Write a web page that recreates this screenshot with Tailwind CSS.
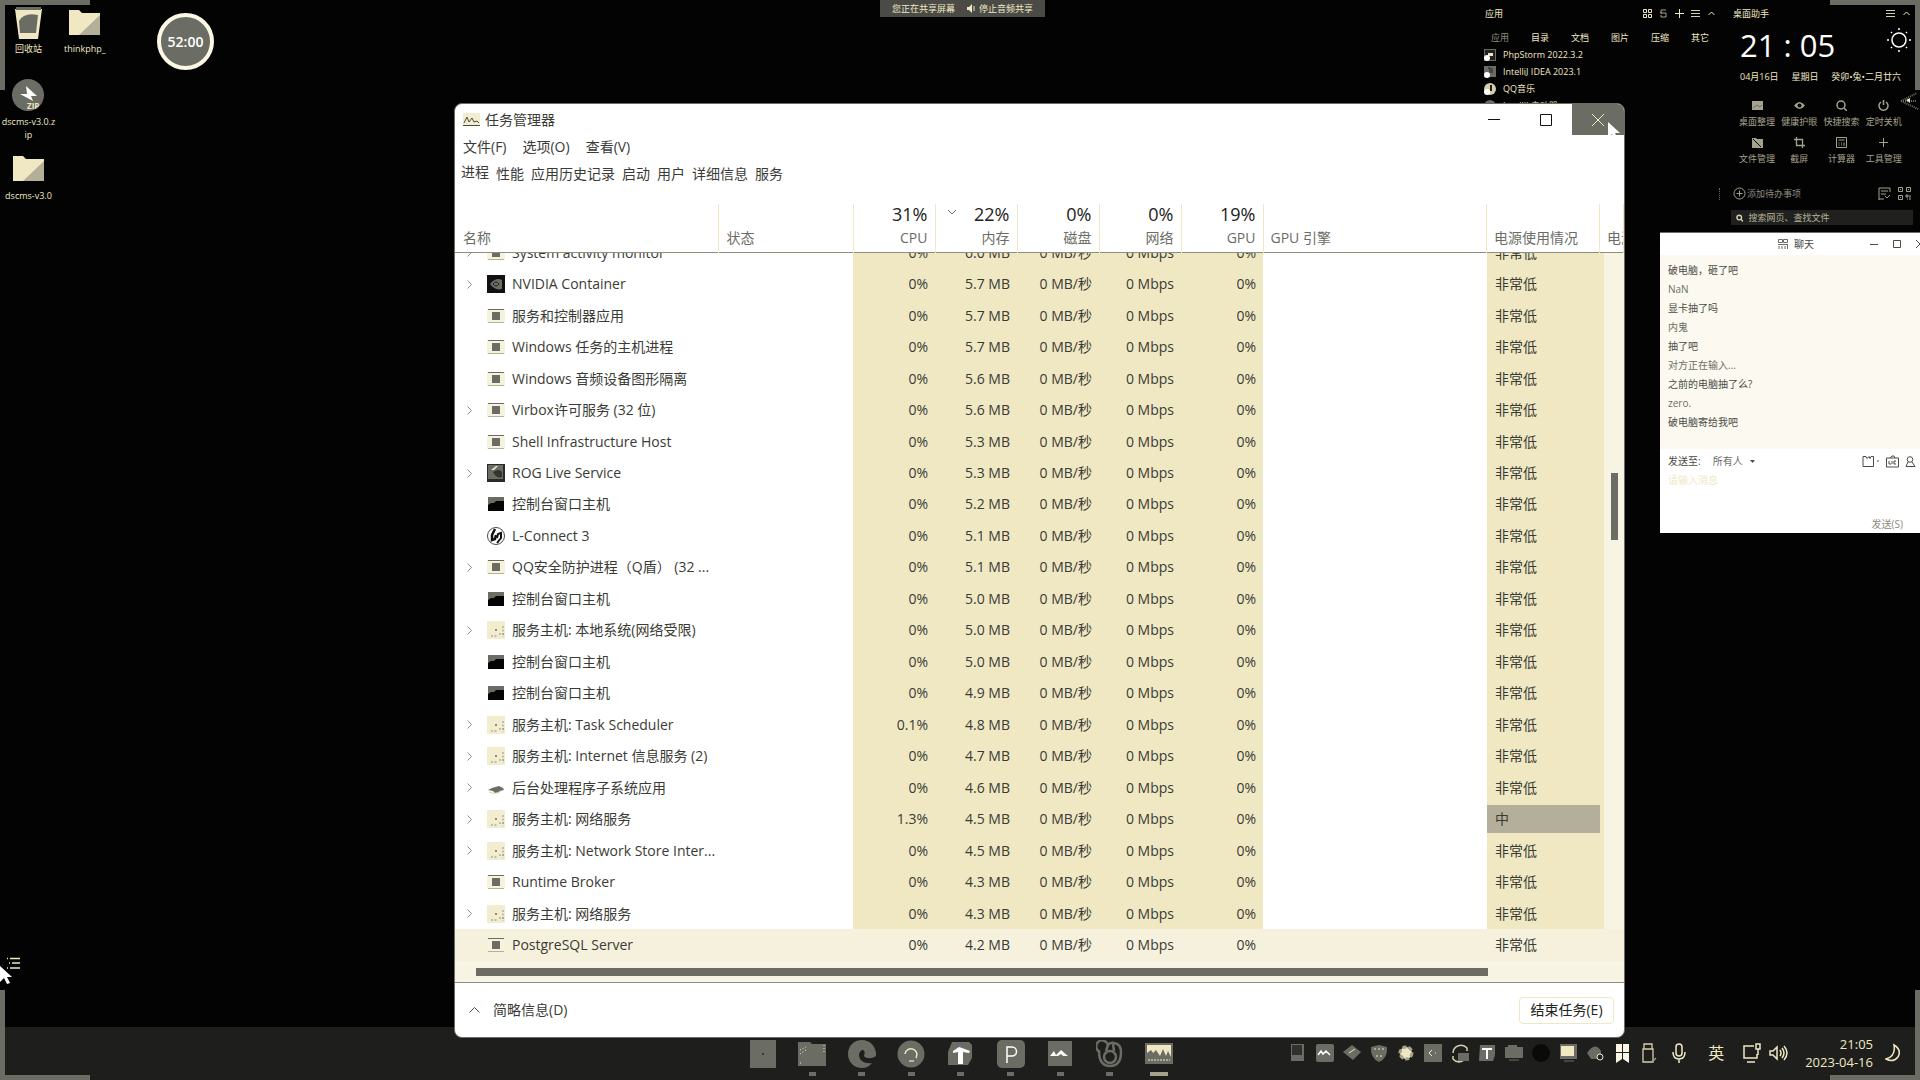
<!DOCTYPE html>
<html lang="zh-CN">
<head>
<meta charset="utf-8">
<title>任务管理器</title>
<script src="https://cdn.jsdelivr.net/npm/@tailwindcss/browser@4"></script>
</head>
<body class="relative h-screen overflow-hidden bg-[#030303] font-['Open_Sans','Noto_Sans_CJK_SC',sans-serif] text-[#efe8c3]">

<!-- shared icon symbols -->
<svg class="hidden">
  <symbol id="app" viewBox="0 0 18 18"><rect x="0" y="2" width="18" height="14" fill="#f7f2dc"/><rect x="1" y="2" width="16" height="1" fill="#6b6d65"/><rect x="5" y="5" width="8" height="8" fill="#6b6d65"/><rect x="1" y="15" width="16" height="1" fill="#b5b29c"/></symbol>
  <symbol id="nv" viewBox="0 0 18 18"><rect width="18" height="18" fill="#111"/><path d="M3 9q6-7 12-4v9q-7 2-12-5z" fill="#6b6d65"/><path d="M6 9q3-4 6 0q-3 4-6 0z" fill="none" stroke="#222"/></symbol>
  <symbol id="rog" viewBox="0 0 18 18"><rect width="18" height="18" fill="#2a2b28"/><rect x="1" y="1" width="15" height="14" fill="#6b6d65"/><path d="M4 6l5-4h2L7 6z" fill="#efe8c3"/><path d="M6 8q6-4 9 0v5q-6 2-9-5z" fill="#33342f"/></symbol>
  <symbol id="con" viewBox="0 0 18 18"><rect x="1" y="2" width="16" height="14" fill="#050505"/><path d="M1 2h16v4H9L7 8H4L1 10z" fill="#6b6d65"/></symbol>
  <symbol id="lc" viewBox="0 0 18 18"><circle cx="9" cy="9" r="8.5" fill="#fff" stroke="#4a4b46"/><path d="M8 2L5 8v5l3-1 1-4" fill="none" stroke="#111" stroke-width="2.500"/><path d="M10 16l4-5V6l-3 1-1 4" fill="none" stroke="#111" stroke-width="2"/></symbol>
  <symbol id="svc" viewBox="0 0 18 18"><rect width="18" height="18" fill="#f3edd0"/><circle cx="9" cy="9" r="1" fill="#6b6d65"/><path d="M4 15h7M12 13h5M16 5v11" stroke="#8f8f80" stroke-dasharray="2 1.5"/></symbol>
  <symbol id="prn" viewBox="0 0 18 18"><path d="M1 11l4-2 7-2 4 2 1 2-4 1-2 2H8l-2-2z" fill="#6b6d65"/><path d="M2 13q6 3 12-1" stroke="#d8d2b2" fill="none"/></symbol>
  <symbol id="folder" viewBox="0 0 32 26"><path d="M0 1h10l3 3h18v22H0z" fill="#efe8c3"/><path d="M31 6v20H10z" fill="#b3af99"/></symbol>
  <symbol id="cursor" viewBox="0 0 12 18"><path d="M0 0l12 11H7l3 6-3 1-3-6-4 4z" fill="#fff"/></symbol>
</svg>

<!-- screen corner frames -->
<div class="absolute left-0 top-0 size-[90px] border-l-[5px] border-t-[5px] border-[#6b6d65]"></div>
<div class="absolute right-0 top-0 size-[90px] border-r-[5px] border-t-[5px] border-[#6b6d65]"></div>

<!-- desktop icons -->
<ul class="absolute left-0 top-[7px] flex w-[57px] flex-col items-center text-center text-[9px] leading-[13px]">
  <li class="flex h-[72px] flex-col items-center gap-[3px]">
    <svg class="h-8 w-[27px]" viewBox="0 0 27 32"><path d="M0 2h27l-4 30H4z" fill="#efe8c3"/><path d="M1 0h25v3H1z" fill="#6b6d65"/><path d="M4 14q5-9 19-6l-2 18H5z" fill="#6b6d65"/></svg>
    <span>回收站</span>
  </li>
  <li class="flex h-[76px] flex-col items-center gap-[4px]">
    <svg class="h-8 w-[33px] shrink-0" viewBox="0 0 33 32"><circle cx="16" cy="16" r="16" fill="#6b6d65"/><path d="M14 7l11 10h-6l2 5-13-7h7z" fill="#fff"/><text x="15" y="30" font-size="8" font-weight="700" fill="#efe8c3">ZIP</text></svg>
    <span>dscms-v3.0.z<br>ip</span>
  </li>
  <li class="flex flex-col items-center gap-[8px]">
    <svg class="h-[26px] w-8"><use href="#folder"/></svg>
    <span>dscms-v3.0</span>
  </li>
</ul>
<div class="absolute left-[64px] top-[9px] flex flex-col items-center gap-[7px] text-[9px] leading-[13px]">
  <svg class="h-[26px] w-8"><use href="#folder"/></svg>
  <span>thinkphp_</span>
</div>
<div class="absolute left-[157px] top-[13px] flex size-[57px] items-center justify-center rounded-full border-4 border-[#fbf7e4] bg-[#6b6d65] text-[14px] font-semibold text-white">52:00</div>

<!-- screen sharing bar -->
<div class="absolute left-1/2 top-0 flex h-[17px] w-[165px] -translate-x-[80px] items-center justify-center gap-[12px] bg-[#4a4b46] text-[9px] leading-[13px]">
  <span>您正在共享屏幕</span>
  <span class="flex items-center gap-[3px]"><svg class="size-[9px]" viewBox="0 0 9 9"><path d="M0 3h2l3-3v9L2 6H0z" fill="#efe8c3"/><path d="M7 2v5" stroke="#efe8c3"/></svg>停止音频共享</span>
</div>

<!-- left dock handle -->
<svg class="absolute left-[7px] top-[957px] h-[14px] w-[14px]" viewBox="0 0 14 14"><path d="M3 1.500h10M5 6h8M3 11h10M0 1.500h1M2 6h1M0 11h1" stroke="#efe8c3" stroke-width="1.500"/></svg>
<svg class="absolute left-0 top-[966px] h-[18px] w-[12px]"><use href="#cursor"/></svg>

<!-- app shelf -->
<section class="absolute right-[200px] top-[5px] w-[240px] text-[9px] leading-[17px]">
  <header class="flex items-center justify-between pl-[5px] pr-[4px]">
    <h2>应用</h2>
    <div class="flex items-center gap-[7px]">
      <svg class="size-[9px]" viewBox="0 0 9 9" fill="none" stroke="#efe8c3"><path d="M.5.5h3v3h-3zM5.500.5h3v3h-3zM.5 5.500h3v3h-3zM5.500 5.500h3v3h-3z"/></svg>
      <svg class="size-[9px]" viewBox="0 0 9 9" fill="none" stroke="#a5a28d"><path d="M7 1H2v3h5v4H2V6M1 4h2"/></svg>
      <svg class="size-[9px]" viewBox="0 0 9 9" stroke="#efe8c3"><path d="M4.500 0v9M0 4.500h9"/></svg>
      <svg class="size-[9px]" viewBox="0 0 9 9" stroke="#d5cfae"><path d="M0 1.500h9M0 4.500h9M0 7.500h9"/></svg>
      <svg class="size-[9px]" viewBox="0 0 9 9" fill="none" stroke="#efe8c3"><path d="M1.500 6l3-3 3 3"/></svg>
    </div>
  </header>
  <nav class="mt-[7px] grid grid-cols-6 text-center">
    <a href="#" class="text-[#8c8c7e]">应用</a><a href="#">目录</a><a href="#">文档</a><a href="#">图片</a><a href="#">压缩</a><a href="#">其它</a>
  </nav>
  <ul class="pl-[4px] text-[9px]">
    <li class="flex items-center gap-[7px]"><svg class="size-3" viewBox="0 0 12 12"><rect x=".5" y=".5" width="11" height="11" fill="#222" stroke="#6b6d65"/><path d="M4 4h5v3H4z" fill="#efe8c3"/><circle cx="3" cy="9" r="3" fill="#fff"/></svg>PhpStorm 2022.3.2</li>
    <li class="flex items-center gap-[7px]"><svg class="size-3" viewBox="0 0 12 12"><rect width="12" height="11" fill="#6b6d65"/><path d="M4 2h2v5M8 2v5" stroke="#222" fill="none"/><circle cx="3" cy="9" r="3" fill="#fff"/></svg>IntelliJ IDEA 2023.1</li>
    <li class="flex items-center gap-[7px]"><svg class="size-3" viewBox="0 0 12 12"><circle cx="6" cy="6" r="6" fill="#d5cfae"/><path d="M7 2v6" stroke="#222" stroke-width="2"/><circle cx="3" cy="9" r="3" fill="#fff"/></svg>QQ音乐</li>
    <li class="flex items-center gap-[7px]"><svg class="size-3" viewBox="0 0 12 12"><circle cx="6" cy="6" r="6" fill="#6b6d65"/></svg>IntelliJ 启动器</li>
  </ul>
</section>

<!-- desktop assistant -->
<div class="absolute right-[200px] top-[188px] h-[12px] border-l border-dotted border-[#6b6d65]"></div>
<section class="absolute right-[7px] top-[5px] w-[182px] text-[9px] leading-[17px]">
  <header class="flex items-center justify-between px-[2px]">
    <h2>桌面助手</h2>
    <div class="flex gap-[7px]">
      <svg class="size-[9px]" viewBox="0 0 9 9" stroke="#d5cfae"><path d="M0 1.500h9M0 4.500h9M0 7.500h9"/></svg>
      <svg class="size-[9px]" viewBox="0 0 9 9" fill="none" stroke="#efe8c3"><path d="M1.500 6l3-3 3 3"/></svg>
    </div>
  </header>
  <div class="flex h-[46px] items-center justify-between pl-[9px] pr-[2px]">
    <time class="text-[31px] leading-[46px] text-white">21 : 05</time>
    <svg class="mb-[10px] size-[24px]" viewBox="0 0 24 24" fill="none" stroke="#fff" stroke-width="1.500"><circle cx="12" cy="12" r="7"/><path d="M12 0v2M12 22v2M0 12h2M22 12h2M4 4l1 1M19 19l1 1M20 4l-1 1M5 19l-1 1"/></svg>
  </div>
  <div class="flex justify-between pl-[9px] pr-[12px]"><span>04月16日</span><span>星期日</span><span>癸卯•兔•二月廿六</span></div>
  <div class="mt-[15px] grid grid-cols-4 gap-y-[7px] pl-[5px] pr-[8px] text-center text-[#a5a28d]">
    <button class="flex flex-col items-center gap-[2px]"><svg class="size-[11px]" viewBox="0 0 11 11"><rect y="1" width="11" height="9" fill="#a5a28d"/><path d="M1 8l4-3 3 2 2-2" stroke="#6b6d65" fill="none"/></svg>桌面整理</button>
    <button class="flex flex-col items-center gap-[2px]"><svg class="size-[11px]" viewBox="0 0 11 11"><path d="M0 5.500q5.500-7 11 0q-5.500 7-11 0z" fill="#a5a28d"/><circle cx="5.500" cy="5.500" r="2" fill="#030303"/></svg>健康护眼</button>
    <button class="flex flex-col items-center gap-[2px]"><svg class="size-[11px]" viewBox="0 0 11 11" fill="none" stroke="#a5a28d" stroke-width="1.500"><circle cx="5" cy="5" r="4"/><path d="M8 8l3 3"/></svg>快捷搜索</button>
    <button class="flex flex-col items-center gap-[2px]"><svg class="size-[11px]" viewBox="0 0 11 11" fill="none" stroke="#a5a28d" stroke-width="1.500"><path d="M3 2a4.500 4.500 0 1 0 5 0M5.500 0v5"/></svg>定时关机</button>
    <button class="flex flex-col items-center gap-[2px]"><svg class="size-[11px]" viewBox="0 0 11 11"><path d="M0 1h4l1 1h6v9H0z" fill="#a5a28d"/><path d="M1 2l8 8" stroke="#030303"/></svg>文件管理</button>
    <button class="flex flex-col items-center gap-[2px]"><svg class="size-[11px]" viewBox="0 0 11 11" fill="none" stroke="#a5a28d" stroke-width="1.300"><path d="M2.500 0v8.500H11M0 2.500h8.500V11"/></svg>截屏</button>
    <button class="flex flex-col items-center gap-[2px]"><svg class="size-[11px]" viewBox="0 0 11 11" fill="none" stroke="#a5a28d"><path d="M.5.5h10v10H.5zM2.500 3h6M2.500 6h1M5 6h1M2.500 8h1M5 8h1M8 5.500V9"/></svg>计算器</button>
    <button class="flex flex-col items-center gap-[2px]"><svg class="size-[11px]" viewBox="0 0 11 11" stroke="#a5a28d"><path d="M5.500 1v9M1 5.500h9"/></svg>工具管理</button>
  </div>
  <div class="mt-[17px] flex h-[18px] items-center gap-[1px] pl-[2px] pr-[2px] text-[#8c8c7e]">
    <svg class="size-[13px]" viewBox="0 0 13 13" fill="none" stroke="#a5a28d"><circle cx="6.500" cy="6.500" r="5.500"/><path d="M6.500 3.500v6M3.500 6.500h6"/></svg>
    <span>添加待办事项</span>
    <svg class="ml-auto mr-[6px] size-[13px]" viewBox="0 0 13 13" fill="none" stroke="#a5a28d"><path d="M1 13V1h11v4M3 4h7M3 7h5M1 12h5M7 9l2 2 3-3"/></svg>
    <svg class="size-[13px]" viewBox="0 0 13 13" fill="none" stroke="#a5a28d"><path d="M.5.5h4v4h-4zM8.500.5h4v4h-4zM.5 8.500h4v4h-4zM8 8h2v2H8zM12 8v5M9 12h1M2 2.500h1M10 2.500h1M2 10.500h1"/></svg>
  </div>
  <label class="mt-[8px] flex h-[15px] items-center gap-[5px] bg-[#20211e] px-[5px] text-[#a5a28d]">
    <svg class="size-[8px]" viewBox="0 0 8 8" fill="none" stroke="#d5cfae" stroke-width="1.500"><circle cx="3.500" cy="3.500" r="2.500"/><path d="M5.500 5.500L8 8"/></svg>
    <input type="search" aria-label="搜索" placeholder="搜索网页、查找文件" class="w-full min-w-0 text-[9px] outline-none placeholder:text-[#b5b29c]">
  </label>
</section>
<svg class="absolute right-0 top-[92px] h-[19px] w-[20px]" viewBox="0 0 20 19"><path d="M1 9L17 1M1 9l17 8M1 9h15" stroke="#6b6d65" stroke-width="2" stroke-dasharray="1 1" fill="none"/><path d="M6 8l4-2v5z" fill="#efe8c3"/></svg>

<!-- chat window -->
<section class="absolute right-0 top-[232px] flex h-[301px] w-[260px] flex-col overflow-hidden bg-white text-[10px] leading-[14px] text-[#4a4b46]">
  <header class="flex h-[23px] shrink-0 items-center border-t border-[#6b6d65]">
    <div class="flex flex-1 items-center gap-[6px] pl-[118px]">
      <svg class="size-[10px]" viewBox="0 0 10 10" fill="none" stroke="#6b6d65"><path d="M.5.5h4v3h-4zM5.500.5h4v3h-4zM0 5.500h10M1 7v3M4 7v3M7 7v3M9.500 6v4"/></svg>
      <h2>聊天</h2>
    </div>
    <div class="flex w-[50px] shrink-0 items-center justify-between">
      <button aria-label="最小化"><svg class="size-[8px]" viewBox="0 0 8 8" stroke="#4a4b46"><path d="M0 4.500h8"/></svg></button>
      <button aria-label="最大化"><svg class="size-[8px]" viewBox="0 0 8 8" fill="none" stroke="#4a4b46"><path d="M.5.5h7v7h-7z"/></svg></button>
      <button aria-label="关闭" class="w-[4px] overflow-hidden"><svg class="size-[8px]" viewBox="0 0 8 8" stroke="#4a4b46"><path d="M0 0l8 8M8 0L0 8"/></svg></button>
    </div>
  </header>
  <ul class="flex h-[194px] shrink-0 flex-col gap-[5px] bg-[#fcfaf0] px-2 pt-[8px]">
    <li>破电脑，砸了吧</li><li class="text-[#6b6d65]">NaN</li><li>显卡抽了吗</li><li class="text-[#6b6d65]">内鬼</li><li>抽了吧</li><li class="text-[#6b6d65]">对方正在输入...</li><li>之前的电脑抽了么?</li><li class="text-[#6b6d65]">zero.</li><li>破电脑寄给我吧</li>
  </ul>
  <div class="flex h-[24px] shrink-0 items-center pl-2 pr-[4px]">
    <span>发送至:</span>
    <button class="ml-[12px] flex items-center gap-[7px] text-[#6b6d65]">所有人<svg class="size-[5px]" viewBox="0 0 5 5"><path d="M0 1h5L2.500 4z" fill="#4a4b46"/></svg></button>
    <div class="ml-auto flex items-center gap-[6px]">
      <svg class="h-[12px] w-[18px]" viewBox="0 0 18 12" fill="none" stroke="#4a4b46"><path d="M1 1.500h3l1 2 2-2 1 2 1-2h2.500v10H1zM15 6h2"/></svg>
      <svg class="size-[13px]" viewBox="0 0 13 13" fill="none" stroke="#4a4b46"><path d="M.5 3h12v9H.5zM4 3l2-2h2l1 2M3 6v3h2M6 6v3M8 6v3h2M8 6h2"/></svg>
      <svg class="size-[11px]" viewBox="0 0 11 11" fill="none" stroke="#4a4b46"><circle cx="5" cy="3.500" r="2.800"/><path d="M3 6l-2 4.500h9L7 6"/></svg>
    </div>
  </div>
  <input type="text" aria-label="消息" placeholder="请输入消息" class="mx-2 h-[14px] shrink-0 outline-none placeholder:text-[#efe8c3]">
  <button class="ml-auto mr-[17px] mt-auto pb-[2px] text-[#8c8c7e]">发送(S)</button>
</section>

<!-- taskbar -->
<footer class="absolute inset-x-0 bottom-0 h-[53px] bg-[#1e1f1c]">
  <nav class="mx-auto grid h-full w-[448px] grid-cols-9 pl-[2px] pt-[13px]">
    <button aria-label="开始" class="flex flex-col items-center"><svg class="h-[28px] w-[26px]" viewBox="0 0 26 28"><path d="M0 0h26v28H0z" fill="#6b6d65"/><path d="M12 14h2" stroke="#030303"/></svg></button>
    <button aria-label="文件资源管理器" class="flex flex-col items-center gap-[4px]"><svg class="size-[28px]" viewBox="0 0 28 28"><path d="M0 2h12l2 2h14v22H0z" fill="#6b6d65"/><path d="M2 10l8-4M2 14l6-4M2 23h3M26 5v8" stroke="#efe8c3" stroke-dasharray="1 2"/></svg><i class="h-1 w-[7px] bg-[#6b6d65]"></i></button>
    <button aria-label="Edge" class="flex flex-col items-center gap-[4px]"><svg class="size-[28px]" viewBox="0 0 28 28"><path d="M14 0C6 0 0 6 0 14s6 14 14 14c4 0 8-2 10-5-7 1-13-2-13-8 0-3 2-5 4-5 2 1 2 3 1 6 2 3 8 3 12 0V13C27 5 21 0 14 0z" fill="#6b6d65"/></svg><i class="h-1 w-[7px] bg-[#6b6d65]"></i></button>
    <button aria-label="浏览器" class="flex flex-col items-center gap-[4px]"><svg class="size-[28px]" viewBox="0 0 28 28"><circle cx="14" cy="14" r="13.500" fill="#6b6d65"/><path d="M8 14a6 6 0 1 1 11 4" fill="none" stroke="#efe8c3" stroke-width="1.500"/><path d="M12 21h5" stroke="#fff"/></svg><i class="h-1 w-[7px] bg-[#6b6d65]"></i></button>
    <button aria-label="Typora" class="flex flex-col items-center gap-[4px]"><svg class="size-[28px]" viewBox="0 0 28 28"><path d="M5 2h17l3 3v13l-4 7H1V12z" fill="#6b6d65"/><path d="M6 11l6-4 3 1 8 3-1 2-6-1v12h-5V12l-5 1z" fill="#fff"/></svg><i class="h-1 w-[7px] bg-[#6b6d65]"></i></button>
    <button aria-label="P" class="flex flex-col items-center gap-[4px]"><svg class="size-[28px]" viewBox="0 0 28 28"><rect width="28" height="28" rx="5" fill="#6b6d65"/><path d="M10 23V7h5a4 4 0 0 1 0 9h-5" fill="none" stroke="#fff" stroke-width="1.500"/></svg><i class="h-1 w-[7px] bg-[#6b6d65]"></i></button>
    <button aria-label="会议" class="flex flex-col items-center gap-[4px]"><svg class="size-[28px]" viewBox="0 0 28 28"><rect x="2" y="1" width="24" height="25" fill="#6b6d65"/><path d="M4 16l4-5 2 4 5-5 7 6h-5l-2-2-3 2z" fill="#fff"/></svg><i class="h-1 w-[7px] bg-[#6b6d65]"></i></button>
    <button aria-label="工具" class="flex flex-col items-center gap-[4px]"><svg class="size-[28px]" viewBox="0 0 28 28" fill="none" stroke="#6b6d65" stroke-width="2.500"><path d="M4 12A6 6 0 1 1 12 5q2-3 6-2 7 1 7 9"/><path d="M3 11q0 15 11 15t11-14"/><circle cx="14" cy="17" r="6"/><path d="M12 5l-2 6M17 4l1 7"/></svg><i class="h-1 w-[7px] bg-[#6b6d65]"></i></button>
    <button aria-label="任务管理器" class="flex flex-col items-center gap-[4px]"><svg class="size-[28px]" viewBox="0 0 28 28"><rect y="3" width="28" height="21" fill="#6b6d65"/><path d="M2 5h24v12l-3-6-2 5-3-7-3 7-4-6-3 3-2-3-4 3z" fill="#efe8c3"/><path d="M3 20h22" stroke="#efe8c3" stroke-dasharray="2 1"/></svg><i class="h-1 w-[18px] bg-[#a5a28d]"></i></button>
  </nav>
  <div class="absolute inset-y-0 right-[20px] flex items-center pb-[1px]">
    <div class="flex items-center">
      <svg class="h-[20px] w-[27px]" viewBox="0 0 27 20"><rect x="6" y="1" width="13" height="17" fill="#6b6d65"/><rect x="7" y="2" width="10" height="10" fill="#30312d"/></svg>
      <svg class="h-[20px] w-[27px]" viewBox="0 0 27 20"><rect x="4" y="1" width="18" height="18" rx="2" fill="#6b6d65"/><path d="M6 12l3-4 2 3 3-3 4 4" fill="none" stroke="#fff" stroke-width="1.500"/></svg>
      <svg class="h-[20px] w-[27px]" viewBox="0 0 27 20"><path d="M4 9l9-7 9 7-8 8z" fill="#6b6d65"/><path d="M10 10l6-4" stroke="#efe8c3"/></svg>
      <svg class="h-[20px] w-[27px]" viewBox="0 0 27 20"><path d="M5 4l8-2 8 2q1 11-8 15q-9-4-8-15z" fill="#6b6d65"/><path d="M8 6h10M10 13h6" stroke="#efe8c3" stroke-dasharray="2 2"/></svg>
      <svg class="h-[20px] w-[27px]" viewBox="0 0 27 20"><circle cx="13" cy="10" r="6" fill="#efe8c3" stroke="#a5a28d" stroke-width="3" stroke-dasharray="4 2"/></svg>
      <svg class="h-[20px] w-[27px]" viewBox="0 0 27 20"><rect x="4" y="1" width="18" height="18" fill="#6b6d65"/><path d="M12 7l-3 3 3 3M15 10h1" stroke="#efe8c3" fill="none"/></svg>
      <svg class="h-[20px] w-[27px]" viewBox="0 0 27 20"><path d="M6 10a8 8 0 0 1 14-5v3M20 12a8 8 0 0 1-14 4v-3" stroke="#d5cfae" fill="none" stroke-width="1.500"/><path d="M11 10h11v8H11z" fill="#6b6d65"/></svg>
      <svg class="h-[20px] w-[27px]" viewBox="0 0 27 20"><path d="M6 2h15v10l-2 6H5z" fill="#6b6d65"/><path d="M8 6h10M13 6v10" stroke="#fff" stroke-width="2"/></svg>
      <svg class="h-[20px] w-[27px]" viewBox="0 0 27 20"><path d="M4 4h3V2h9v2h6v11H4z" fill="#6b6d65"/><path d="M8 17h10" stroke="#6b6d65"/></svg>
      <svg class="h-[20px] w-[27px]" viewBox="0 0 27 20"><circle cx="13" cy="10" r="9" fill="#0a0a09"/></svg>
      <svg class="h-[20px] w-[27px]" viewBox="0 0 27 20"><rect x="5" y="1" width="17" height="15" fill="#6b6d65"/><rect x="6" y="3" width="13" height="10" fill="#efe8c3"/><path d="M9 18h10" stroke="#6b6d65"/></svg>
      <svg class="h-[20px] w-[27px]" viewBox="0 0 27 20"><path d="M5 10q8-12 14-2v8H9z" fill="#6b6d65"/><circle cx="18" cy="14" r="3" fill="#222" stroke="#efe8c3"/></svg>
      <svg class="h-[20px] w-[27px]" viewBox="0 0 27 20"><path d="M7 1h6v8H7zM14 1h6v8h-6zM7 10h6v6l-6 4zM14 10h6v10l-6-4z" fill="#fbf7e4"/></svg>
      <svg class="h-[20px] w-[27px]" viewBox="0 0 27 20" fill="none" stroke="#d5cfae" stroke-width="1.300"><path d="M8 1h8v5H8zM7 6h10v13H7z"/><path d="M16 19l4-4" stroke="#a5a28d"/></svg>
    </div>
    <svg class="ml-[9px] h-[20px] w-[14px]" viewBox="0 0 14 20" fill="none" stroke="#efe8c3" stroke-width="1.500"><rect x="4" y="1" width="6" height="12" rx="3"/><path d="M1 9q0 7 6 7t6-7M7 16v4"/></svg>
    <span class="ml-[22px] text-[16px] leading-[20px]">英</span>
    <svg class="ml-[19px] h-[20px] w-[18px]" viewBox="0 0 18 20" fill="none" stroke="#efe8c3" stroke-width="1.500"><path d="M11 3H1v12h13v-4M4 19h8M13 1h4v5h-4zM15 6v6"/></svg>
    <svg class="ml-[8px] h-[20px] w-[19px]" viewBox="0 0 19 20" fill="none" stroke="#efe8c3" stroke-width="1.500"><path d="M1 8h3l4-4v12l-4-4H1zM11 7q2 3 0 6M13 5q4 5 0 10M15 3q6 7 0 14"/></svg>
    <time class="ml-[17px] text-right text-[13px] leading-[18px]">21:05<br>2023-04-16</time>
    <svg class="ml-[12px] h-[20px] w-[15px]" viewBox="0 0 15 20" fill="none" stroke="#efe8c3" stroke-width="1.500"><path d="M9 2q8 5 4 12q-5 6-12 2q10-3 8-14z"/></svg>
  </div>
</footer>
<div class="absolute bottom-0 left-0 size-[90px] border-b-[5px] border-l-[5px] border-[#6b6d65]"></div>
<div class="absolute bottom-0 right-0 size-[90px] border-b-[5px] border-r-[5px] border-[#6b6d65]"></div>

<!-- task manager window -->
<main class="absolute bottom-[42px] left-[454px] right-[295px] top-[103px] flex flex-col overflow-hidden rounded-lg border border-[#6b6d65] bg-white text-[14px] leading-[20px] text-[#3a3b36]">
  <header class="flex h-[31px] shrink-0 items-center pl-2">
    <svg class="h-[13px] w-[17px]" viewBox="0 0 17 13"><rect width="17" height="13" fill="#f3edd0"/><path d="M1 10l3-6 2 5 3-4 2 4 3-1 2 2M0 12.500h17" fill="none" stroke="#4a4b46"/></svg>
    <h1 class="ml-[5px] flex-1">任务管理器</h1>
    <button aria-label="最小化" class="grid h-full w-[52px] place-items-center"><svg class="size-[12px]" viewBox="0 0 12 12" stroke="#111"><path d="M0 5.500h12"/></svg></button>
    <button aria-label="最大化" class="grid h-full w-[52px] place-items-center"><svg class="size-[12px]" viewBox="0 0 12 12" fill="none" stroke="#111"><path d="M.5.5h11v11H.5z"/></svg></button>
    <button aria-label="关闭" class="grid h-full w-[52px] place-items-center bg-[#6b6d65]"><svg class="size-[12px]" viewBox="0 0 12 12" stroke="#efe8c3"><path d="M0 0l12 12M12 0L0 12"/></svg></button>
  </header>
  <nav class="flex h-[24px] shrink-0 items-center gap-[16px] px-2">
    <button>文件(F)</button><button>选项(O)</button><button>查看(V)</button>
  </nav>
  <nav class="flex h-[30px] shrink-0 items-center gap-[7px] pl-[6px]">
    <button class="pb-[4px]">进程</button><button>性能</button><button>应用历史记录</button><button>启动</button><button>用户</button><button>详细信息</button><button>服务</button>
  </nav>
  <table class="mt-[15px] w-full shrink-0 table-fixed border-b border-[#8f8f80]">
    <thead>
      <tr class="h-[48px] text-right align-bottom text-[#6b6d65] [&>th]:border-r [&>th]:border-[#efe8c3] [&>th]:pb-[4px] [&>th]:font-normal">
        <th class="w-[263px] pl-2 text-left">名称</th>
        <th class="w-[135px] pl-2 text-left">状态</th>
        <th class="w-[82px] pr-[7px]"><b class="mb-[4px] block text-[18px] font-normal text-[#222]">31%</b>CPU</th>
        <th class="relative w-[82px] pr-[7px]"><svg class="absolute left-[11px] top-[6px] h-[5px] w-[10px]" viewBox="0 0 10 5" fill="none" stroke="#6b6d65"><path d="M1 0l4 4 4-4"/></svg><b class="mb-[4px] block text-[18px] font-normal text-[#222]">22%</b>内存</th>
        <th class="w-[82px] pr-[7px]"><b class="mb-[4px] block text-[18px] font-normal text-[#222]">0%</b>磁盘</th>
        <th class="w-[82px] pr-[7px]"><b class="mb-[4px] block text-[18px] font-normal text-[#222]">0%</b>网络</th>
        <th class="w-[82px] pr-[7px]"><b class="mb-[4px] block text-[18px] font-normal text-[#222]">19%</b>GPU</th>
        <th class="pl-[7px] text-left">GPU 引擎</th>
        <th class="w-[113px] whitespace-nowrap pl-[7px] text-left">电源使用情况</th>
        <th class="w-[24px] overflow-hidden whitespace-nowrap pl-[7px] text-left">电源</th>
      </tr>
    </thead>
  </table>
  <div class="relative flex min-h-0 flex-1 flex-col justify-end overflow-hidden border-b border-[#8f8f80]">
    <table class="h-[724px] w-full shrink-0 table-fixed">
      <colgroup><col class="w-[263px]"><col class="w-[135px]"><col class="w-[82px]"><col class="w-[82px]"><col class="w-[82px]"><col class="w-[82px]"><col class="w-[82px]"><col><col class="w-[117px]"><col class="w-[20px]"></colgroup>
      <tbody id="rows"></tbody>
    </table>
    <div class="h-[21px] shrink-0 bg-[#f8f4e3] pl-[21px] pr-[136px] pt-[7px]"><div class="h-2 bg-[#6b6d65]"></div></div>
    <div class="absolute right-[6px] top-[220px] h-[67px] w-[7px] bg-[#6b6d65]"></div>
  </div>
  <footer class="flex h-[54px] shrink-0 items-center justify-between pl-[14px] pr-[10px]">
    <button class="flex items-center gap-[13px]"><svg class="h-[6px] w-[11px]" viewBox="0 0 11 6" fill="none" stroke="#4a4b46"><path d="M.5 5.500l5-5 5 5"/></svg>简略信息(D)</button>
    <button class="h-[27px] w-[95px] rounded border border-[#efe8c3] text-[#222]">结束任务(E)</button>
  </footer>
</main>
<svg class="absolute right-[300px] top-[122px] h-[18px] w-[12px]"><use href="#cursor"/></svg>

<script>
// expandable, icon, name, cpu, memory, power
const processes = [
  [1,'app','System activity monitor','0%','6.0 MB','非常低'],
  [1,'nv','NVIDIA Container','0%','5.7 MB','非常低'],
  [0,'app','服务和控制器应用','0%','5.7 MB','非常低'],
  [0,'app','Windows 任务的主机进程','0%','5.7 MB','非常低'],
  [0,'app','Windows 音频设备图形隔离','0%','5.6 MB','非常低'],
  [1,'app','Virbox许可服务 (32 位)','0%','5.6 MB','非常低'],
  [0,'app','Shell Infrastructure Host','0%','5.3 MB','非常低'],
  [1,'rog','ROG Live Service','0%','5.3 MB','非常低'],
  [0,'con','控制台窗口主机','0%','5.2 MB','非常低'],
  [0,'lc','L-Connect 3','0%','5.1 MB','非常低'],
  [1,'app','QQ安全防护进程（Q盾） (32 ...','0%','5.1 MB','非常低'],
  [0,'con','控制台窗口主机','0%','5.0 MB','非常低'],
  [1,'svc','服务主机: 本地系统(网络受限)','0%','5.0 MB','非常低'],
  [0,'con','控制台窗口主机','0%','5.0 MB','非常低'],
  [0,'con','控制台窗口主机','0%','4.9 MB','非常低'],
  [1,'svc','服务主机: Task Scheduler','0.1%','4.8 MB','非常低'],
  [1,'svc','服务主机: Internet 信息服务 (2)','0%','4.7 MB','非常低'],
  [1,'prn','后台处理程序子系统应用','0%','4.6 MB','非常低'],
  [1,'svc','服务主机: 网络服务','1.3%','4.5 MB','中'],
  [1,'svc','服务主机: Network Store Inter...','0%','4.5 MB','非常低'],
  [0,'app','Runtime Broker','0%','4.3 MB','非常低'],
  [1,'svc','服务主机: 网络服务','0%','4.3 MB','非常低'],
  [0,'app','PostgreSQL Server','0%','4.2 MB','非常低']
];
document.getElementById('rows').innerHTML = processes.map(([open, icon, name, cpu, mem, power], i) => {
  const selected = i === processes.length - 1;
  const heat = selected ? 'pr-[7px] text-right' : 'bg-[#efe8c3] pr-[7px] text-right';
  const powerText = power === '中' ? '<div class="-my-[4px] mr-[4px] bg-[#b3af9a] py-[4px] pl-2">中</div>' : `<div class="pl-2">${power}</div>`;
  return `<tr class="${selected ? 'bg-[#f6f1dc]' : ''} whitespace-nowrap">
    <td><div class="flex items-center pl-[11px]">
      <svg class="mr-[14px] h-[9px] w-[7px]" viewBox="0 0 7 9" fill="none" stroke="#8f8f80">${open ? '<path d="M1.500.5l4 4-4 4"/>' : ''}</svg>
      <svg class="mr-[7px] size-[18px]"><use href="#${icon}"/></svg><span>${name}</span></div></td>
    <td></td><td class="${heat}">${cpu}</td><td class="${heat}">${mem}</td><td class="${heat}">0 MB/秒</td>
    <td class="${heat}">0 Mbps</td><td class="${heat}">0%</td><td></td>
    <td class="${selected ? '' : 'bg-[#efe8c3]'}">${powerText}</td><td class="${selected ? '' : 'bg-[#f8f4e3]'}"></td></tr>`;
}).join('');
</script>
</body>
</html>
